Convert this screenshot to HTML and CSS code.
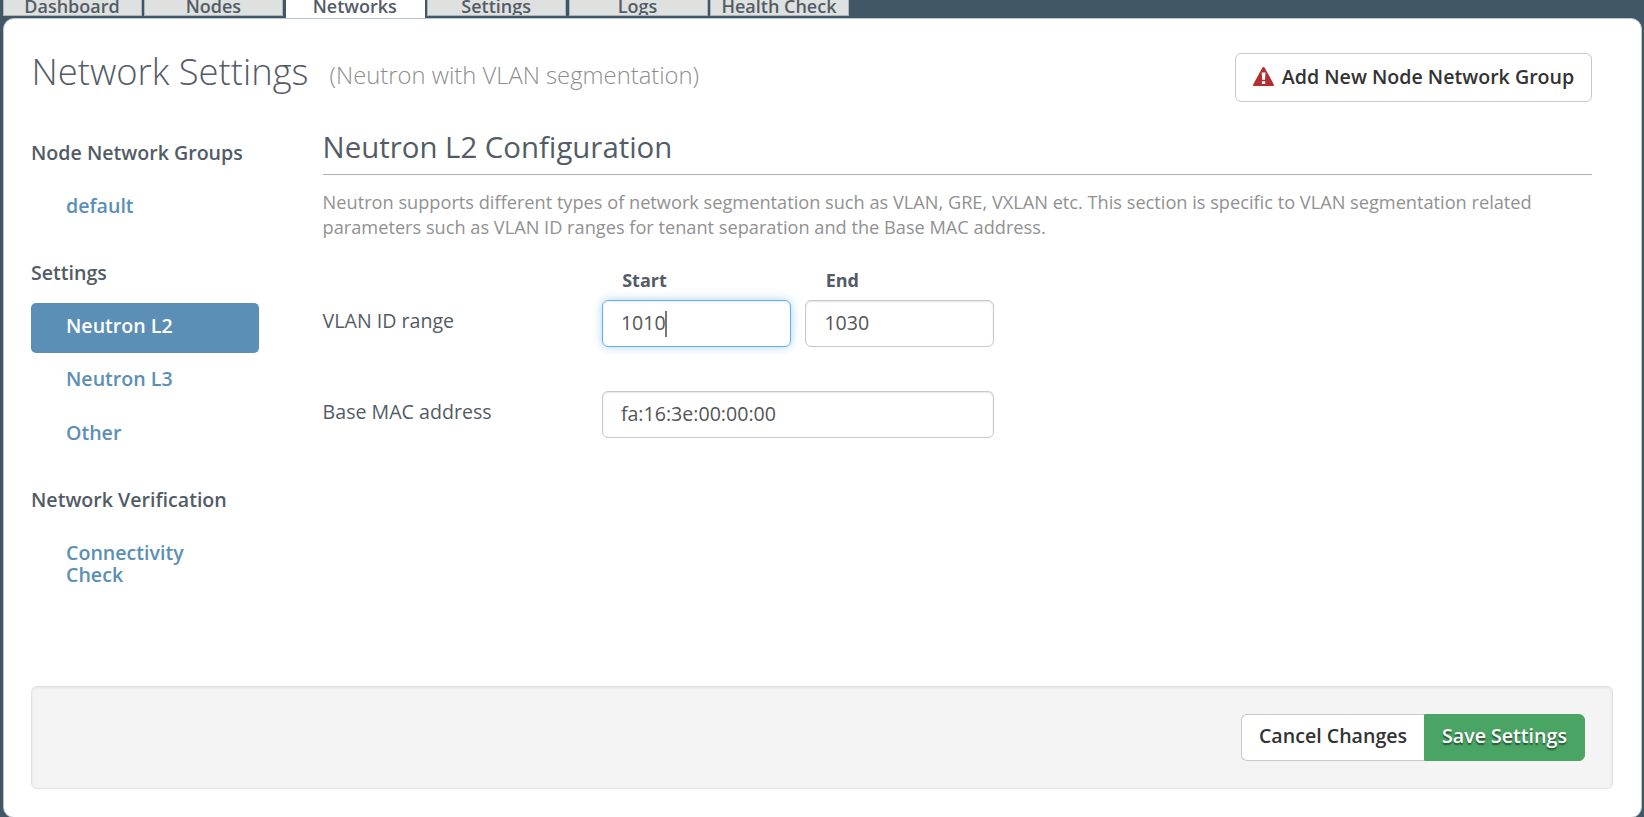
FILE: index.html
```html
<!DOCTYPE html>
<html lang="en">
<head>
<meta charset="utf-8">
<title>Network Settings</title>
<link rel="stylesheet" href="styles.css">
</head>
<body>
<nav class="tabs">
  <a class="tab">Dashboard</a>
  <a class="tab">Nodes</a>
  <a class="tab tab-active">Networks</a>
  <a class="tab">Settings</a>
  <a class="tab">Logs</a>
  <a class="tab">Health Check</a>
</nav>
<main class="panel">
  <header class="page-head">
    <h1 class="title">Network Settings</h1>
    <span class="subtitle">(Neutron with VLAN segmentation)</span>
    <button class="btn btn-add">
      <svg class="warn" viewBox="0 0 21 19" width="21" height="19"><path fill="#b03031" d="M9.3.8Q10.5-.8 11.7.8L20.7 17.2Q21.5 19 19.8 19H1.2Q-.5 19 .3 17.2Z"/><path fill="#fff" d="M8.7 5.6H12.5L12 12.8H9.2ZM8.9 14.2H12.2V16.9H8.9Z"/></svg>
      <span class="btn-text">Add New Node Network Group</span>
    </button>
  </header>
  <div class="body">
    <aside class="side">
      <section class="group">
        <h2 class="group-title">Node Network Groups</h2>
        <a class="item">default</a>
      </section>
      <section class="group">
        <h2 class="group-title">Settings</h2>
        <a class="item item-active">Neutron L2</a>
        <a class="item">Neutron L3</a>
        <a class="item">Other</a>
      </section>
      <section class="group">
        <h2 class="group-title">Network Verification</h2>
        <a class="item">Connectivity Check</a>
      </section>
    </aside>
    <section class="content">
      <h3 class="section-title">Neutron L2 Configuration</h3>
      <p class="desc">Neutron supports different types of network segmentation such as VLAN, GRE, VXLAN etc. This section is specific to VLAN segmentation related parameters such as VLAN ID ranges for tenant separation and the Base MAC address.</p>
      <div class="form">
        <div class="heads"><span>Start</span><span>End</span></div>
        <label class="label">VLAN ID range</label>
        <div class="field field-focus">1010<i class="caret"></i></div>
        <div class="field">1030</div>
        <label class="label">Base MAC address</label>
        <div class="field field-wide">fa:16:3e:00:00:00</div>
      </div>
    </section>
  </div>
  <footer class="actions">
    <button class="btn btn-cancel">Cancel Changes</button>
    <button class="btn btn-save">Save Settings</button>
  </footer>
</main>
</body>
</html>
```
FILE: styles.css
```css
* { box-sizing: border-box; }
html { background: #415766; }
body {
  margin: 0;
  height: 817px;
  overflow: hidden;
  background: #415766;
  color: #535c66;
  font: 19.6px/22px "Open Sans", sans-serif;
}
h1, h2, h3, p { margin: 0; font-weight: inherit; font-size: inherit; }

.tabs {
  display: flex;
  gap: 2.4px;
  height: 18px;
  padding-left: 3px;
}
.tab {
  width: 139px;
  height: 16px;
  padding-right: 1px;
  overflow: hidden;
  background: #dfe1e0;
  border: 1px solid #aab5bc;
  border-top: 0;
  font-size: 18px;
  font-weight: 600;
  line-height: 12px;
  text-align: center;
}
.tab-active {
  height: 18px;
  background: #fff;
  border-color: #fff;
}

.panel {
  margin: 0 2.4px 0 3px;
  height: 800px;
  padding: 0 27.6px 0 27px;
  background: #fff;
  border: 1px solid #b9c5cd;
  border-radius: 11px;
}

.page-head {
  display: flex;
  height: 106px;
  padding-right: 21px;
}
.title {
  margin: 26px 0 0 0.5px;
  font-size: 36.4px;
  font-weight: 300;
  line-height: 52px;
}
.subtitle {
  margin: 30px 0 0 21px;
  font-size: 23.8px;
  font-weight: 300;
  line-height: 52px;
  color: #8d8d8d;
}

.btn {
  display: flex;
  align-items: center;
  justify-content: center;
  margin: 0;
  padding: 0;
  border: 1px solid #c8c8c8;
  background: #fff;
  color: #333;
  font: 600 19.6px/22px "Open Sans", sans-serif;
}
.btn-add {
  gap: 8px;
  width: 357px;
  height: 49px;
  margin: 34px 0 0 auto;
  padding-bottom: 3px;
  border-radius: 6px;
}
.btn-text { padding-top: 1px; }
.warn { flex: none; }

.body { display: flex; height: 561px; }
.side { width: 228px; padding-top: 17px; }
.group { margin-bottom: 29px; }
.group-title {
  height: 41px;
  font-weight: 600;
}
.item {
  display: block;
  padding: 12px 60px 16px 35px;
  margin-bottom: 3.4px;
  border-radius: 5px;
  color: #5b8fb5;
  font-weight: 600;
}
.item-active { background: #5b8fb5; color: #fff; }

.content { flex: none; width: 1269px; margin-left: 63.6px; }
.section-title {
  height: 50px;
  padding-top: 2px;
  border-bottom: 1px solid #b0b0b0;
  font-size: 29.4px;
  line-height: 40px;
}
.desc {
  margin-top: 15px;
  font-size: 18.2px;
  line-height: 25.2px;
  color: #919191;
}
.form {
  display: grid;
  grid-template-columns: 264.8px 189px 189px;
  grid-template-rows: 60px 91px 47px;
  column-gap: 14.5px;
}
.heads {
  grid-column: 2 / 4;
  display: flex;
  padding: 29px 0 0 20.3px;
  font-size: 18px;
  font-weight: 700;
}
.heads span { flex: none; width: 203.5px; }
.label { padding-top: 10px; }
.field {
  position: relative;
  height: 47px;
  padding: 11px 18px;
  border: 1px solid #c8c8c8;
  border-radius: 6px;
  box-shadow: inset 0 1px 2px rgba(0, 0, 0, .1);
  color: #555;
}
.field-wide { grid-column: 2 / 4; }
.field-focus {
  border-color: #66afe9;
  box-shadow: inset 0 1px 2px rgba(0, 0, 0, .08), 0 0 10px rgba(102, 175, 233, .55);
}
.caret {
  position: absolute;
  left: 62px;
  top: 10px;
  width: 2px;
  height: 26px;
  background: #777;
}

.actions {
  display: flex;
  justify-content: flex-end;
  height: 103px;
  padding: 27px 27px 0 0;
  background: #f4f4f4;
  border: 1px solid #e2e2e2;
  border-radius: 6px;
  box-shadow: inset 0 1px 3px rgba(0, 0, 0, .07);
}
.btn-cancel {
  width: 183px;
  height: 47px;
  padding-bottom: 3px;
  border-right: 0;
  border-radius: 6px 0 0 6px;
}
.btn-save {
  width: 161px;
  height: 47px;
  padding-bottom: 3px;
  border-color: #4aa564;
  border-radius: 0 6px 6px 0;
  background: #4aa564;
  color: #fff;
  text-shadow: 0 1.5px 1.5px rgba(0, 0, 0, .5);
}
```
